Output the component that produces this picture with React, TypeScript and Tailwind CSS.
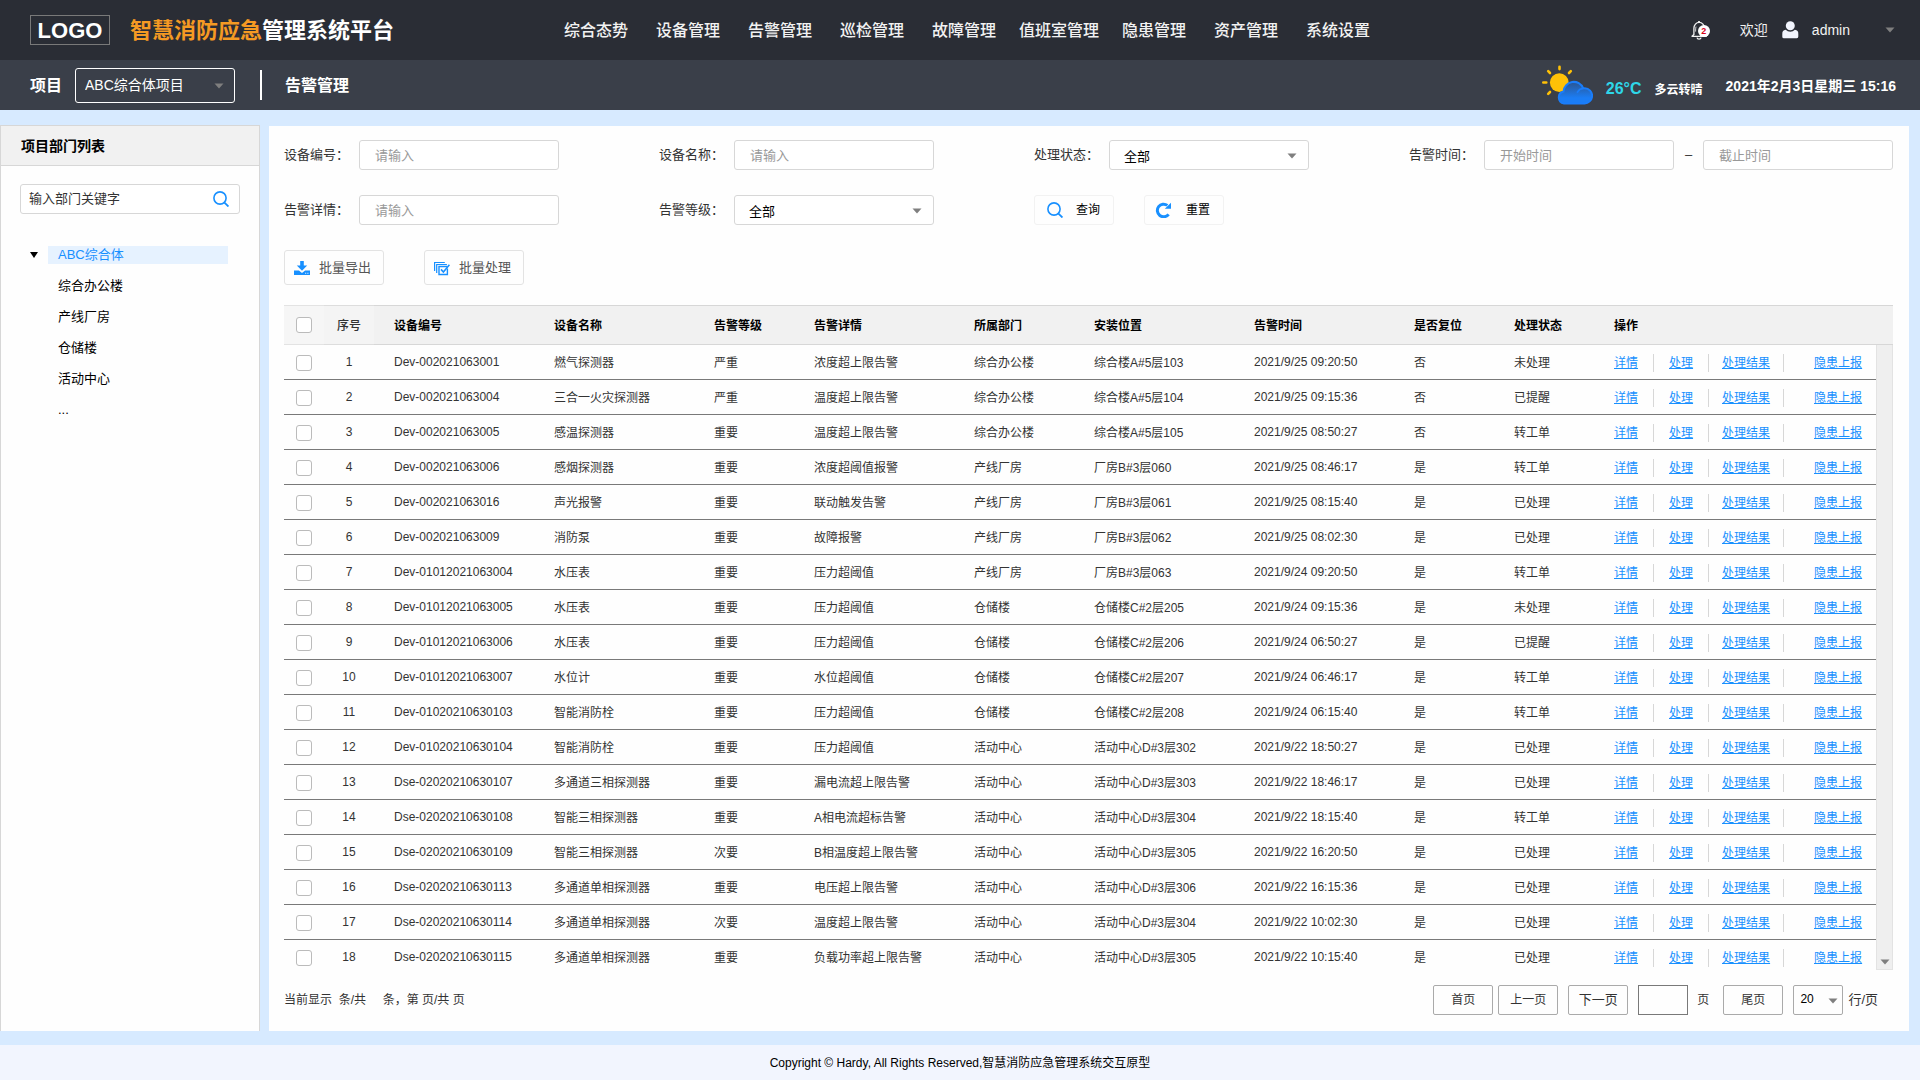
import { ReactNode } from "react";

const nav_items = ['综合态势', '设备管理', '告警管理', '巡检管理', '故障管理', '值班室管理', '隐患管理', '资产管理', '系统设置'];
const departments = ['综合办公楼', '产线厂房', '仓储楼', '活动中心', '...'];

// 设备编号, 设备名称, 告警等级, 告警详情, 所属部门, 安装位置, 告警时间, 是否复位, 处理状态
const alarms = [
    ['Dev-002021063001', '燃气探测器', '严重', '浓度超上限告警', '综合办公楼', '综合楼A#5层103', '2021/9/25 09:20:50', '否', '未处理'],
    ['Dev-002021063004', '三合一火灾探测器', '严重', '温度超上限告警', '综合办公楼', '综合楼A#5层104', '2021/9/25 09:15:36', '否', '已提醒'],
    ['Dev-002021063005', '感温探测器', '重要', '温度超上限告警', '综合办公楼', '综合楼A#5层105', '2021/9/25 08:50:27', '否', '转工单'],
    ['Dev-002021063006', '感烟探测器', '重要', '浓度超阈值报警', '产线厂房', '厂房B#3层060', '2021/9/25 08:46:17', '是', '转工单'],
    ['Dev-002021063016', '声光报警', '重要', '联动触发告警', '产线厂房', '厂房B#3层061', '2021/9/25 08:15:40', '是', '已处理'],
    ['Dev-002021063009', '消防泵', '重要', '故障报警', '产线厂房', '厂房B#3层062', '2021/9/25 08:02:30', '是', '已处理'],
    ['Dev-01012021063004', '水压表', '重要', '压力超阈值', '产线厂房', '厂房B#3层063', '2021/9/24 09:20:50', '是', '转工单'],
    ['Dev-01012021063005', '水压表', '重要', '压力超阈值', '仓储楼', '仓储楼C#2层205', '2021/9/24 09:15:36', '是', '未处理'],
    ['Dev-01012021063006', '水压表', '重要', '压力超阈值', '仓储楼', '仓储楼C#2层206', '2021/9/24 06:50:27', '是', '已提醒'],
    ['Dev-01012021063007', '水位计', '重要', '水位超阈值', '仓储楼', '仓储楼C#2层207', '2021/9/24 06:46:17', '是', '转工单'],
    ['Dev-01020210630103', '智能消防栓', '重要', '压力超阈值', '仓储楼', '仓储楼C#2层208', '2021/9/24 06:15:40', '是', '转工单'],
    ['Dev-01020210630104', '智能消防栓', '重要', '压力超阈值', '活动中心', '活动中心D#3层302', '2021/9/22 18:50:27', '是', '已处理'],
    ['Dse-02020210630107', '多通道三相探测器', '重要', '漏电流超上限告警', '活动中心', '活动中心D#3层303', '2021/9/22 18:46:17', '是', '已处理'],
    ['Dse-02020210630108', '智能三相探测器', '重要', 'A相电流超标告警', '活动中心', '活动中心D#3层304', '2021/9/22 18:15:40', '是', '转工单'],
    ['Dse-02020210630109', '智能三相探测器', '次要', 'B相温度超上限告警', '活动中心', '活动中心D#3层305', '2021/9/22 16:20:50', '是', '已处理'],
    ['Dse-02020210630113', '多通道单相探测器', '重要', '电压超上限告警', '活动中心', '活动中心D#3层306', '2021/9/22 16:15:36', '是', '已处理'],
    ['Dse-02020210630114', '多通道单相探测器', '次要', '温度超上限告警', '活动中心', '活动中心D#3层304', '2021/9/22 10:02:30', '是', '已处理'],
    ['Dse-02020210630115', '多通道单相探测器', '重要', '负载功率超上限告警', '活动中心', '活动中心D#3层305', '2021/9/22 10:15:40', '是', '已处理'],
];

const columns = [
    { title: '设备编号', width: 'w-[160px]' },
    { title: '设备名称', width: 'w-[160px]' },
    { title: '告警等级', width: 'w-[100px]' },
    { title: '告警详情', width: 'w-[160px]' },
    { title: '所属部门', width: 'w-[120px]' },
    { title: '安装位置', width: 'w-[160px]' },
    { title: '告警时间', width: 'w-[160px]' },
    { title: '是否复位', width: 'w-[100px]' },
    { title: '处理状态', width: 'w-[100px]' },
    { title: '操作', width: '' },
];

// device number and alarm time hold no Chinese text and sit a little higher
const latin_columns = [0, 6];

const Caret = ({ className = '' }: { className?: string }) => (
    <svg className={`h-[6px] w-[10px] ${className}`} viewBox="0 0 10 6" fill="#7f7f7f">
        <path d="M0.5 0.5h9L5 5.5z" />
    </svg>
);

const SearchIcon = () => (
    <svg className="size-4 shrink-0" viewBox="0 0 16 16" fill="none" stroke="#1890ff" strokeWidth="1.6">
        <circle cx="7" cy="7" r="6.1" />
        <path d="M11.2 11.4l4.2 4.1" strokeWidth="1.8" />
    </svg>
);

const ResetIcon = () => (
    <svg className="size-4 shrink-0" viewBox="0 0 16 16">
        <path d="M13.6 12.4A6.3 6.3 0 1 1 12.4 3.4" fill="none" stroke="#1890ff" strokeWidth="3" />
        <path d="M16 0.8v6h-6.2z" fill="#1890ff" />
    </svg>
);

const ExportIcon = () => (
    <svg className="size-4 shrink-0" viewBox="0 0 16 16" fill="#1890ff">
        <path d="M6.2 1h3.6v4.6h3.4L8 10.8 2.8 5.6h3.4z" />
        <path d="M0 10.6h4.9L8 13l3.1-2.4H16V15H0z" />
        <path d="M11.2 12.8h1v1h-1zM13.4 12.8h1v1h-1z" fill="#fff" />
    </svg>
);

const BatchIcon = () => (
    <svg className="size-4 shrink-0" viewBox="0 0 16 16" fill="none" stroke="#1890ff">
        <path d="M0.6 11V2.5h10.2M2.7 13V4.5h10.2" strokeWidth="1.2" />
        <path d="M13.4 8.5v6H5v-8h8" strokeWidth="1.4" />
        <path d="M7 9.4l2.4 2.6 6-7.2" strokeWidth="1.6" />
    </svg>
);

const BellIcon = () => (
    <svg className="h-5 w-[19px]" viewBox="0 0 19 20" fill="none" stroke="#f2f2f2" strokeWidth="1.3">
        <path d="M8 2.2V1" strokeWidth="1.8" />
        <path d="M2.9 14.6V8.2a5.3 5.8 0 0 1 10.6 0v6.4l1.8 1.7H1z" strokeLinejoin="round" />
        <path d="M5 6.6c-.4 1.4-.4 3-.4 5" strokeWidth="0.8" />
        <path d="M6 17.6c.5 1.9 3.6 1.9 4.1 0" />
    </svg>
);

const WeatherIcon = () => (
    <svg className="h-10 w-[51px]" viewBox="0 0 51 40">
        <defs>
            <linearGradient id="cloud" x1="0" y1="0" x2="0" y2="1">
                <stop offset="0" stopColor="#2b5591" />
                <stop offset="0.75" stopColor="#1b7df5" />
            </linearGradient>
        </defs>
        <g stroke="#ffc107" strokeWidth="2.6" strokeLinecap="round">
            <path d="M17.5 1.7v2.4M6.2 6.2l1.8 1.8M28.8 6.2L27 8M1.3 17.5h3M6.2 28.8L8 27" />
        </g>
        <circle cx="17.3" cy="17.6" r="9.4" fill="#ffc107" />
        <path
            d="M22 38.4h20.2a7.6 7.6 0 0 0 0.6-15.2 8 8 0 0 0-1.6 0.2 10.2 10.2 0 0 0-19.7 3.2 6 6 0 0 0 0.5 11.8z"
            fill="url(#cloud)" stroke="#1a7dfa" strokeWidth="2"
        />
        <path d="M35.5 27.2c1-2 2.5-3.4 5.6-3.8" fill="none" stroke="#1a7dfa" strokeWidth="1.8" strokeLinecap="round" />
    </svg>
);

const UserIcon = () => (
    <svg className="h-[18px] w-[17px]" viewBox="0 0 17 18" fill="#f2f5fe">
        <circle cx="8.3" cy="4.7" r="4.5" />
        <path d="M0.3 17V13a4 4 0 0 1 3.4-4.2 6.6 6.6 0 0 0 9.2 0A4 4 0 0 1 16.3 13v2.6A1.6 1.6 0 0 1 14.7 17.3H1.9A1.6 1.6 0 0 1 0.3 15.7z" />
    </svg>
);

const Checkbox = ({ label }: { label: string }) => (
    <input
        type="checkbox"
        aria-label={label}
        className="block size-4 mx-auto appearance-none rounded-[3px] border border-[#bbbbbb] bg-white checked:bg-[#1890ff]"
    />
);

const Field = ({ id, label, children }: { id: string, label: string, children: ReactNode }) => (
    <div className="flex items-center">
        <label htmlFor={id} className="w-[75px] shrink-0 whitespace-nowrap">{label}</label>
        {children}
    </div>
);

const TextInput = ({ id, placeholder, label }: { id: string, placeholder: string, label?: string }) => (
    <input
        id={id}
        aria-label={label}
        placeholder={placeholder}
        className="h-[30px] w-0 min-w-0 flex-1 rounded-[3px] border border-[#d7d7d7] bg-white px-[15px] text-[13px] placeholder:text-[#999999]"
    />
);

const SelectInput = ({ id }: { id: string }) => (
    <div className="relative flex-1">
        <select id={id} className="block h-[30px] w-full appearance-none rounded-[3px] border border-[#d7d7d7] bg-white pl-[14px] pt-[3px] text-[13px] text-black">
            <option>全部</option>
        </select>
        <Caret className="pointer-events-none absolute right-3 top-[13px]" />
    </div>
);

const Header = () => (
    <header className="text-[#f2f2f2]">
        <div className="flex h-[60px] items-center bg-[#2a2d35] pl-[30px] pr-[25px]">
            <div className="flex h-[30px] w-20 items-center justify-center border border-[#797979] text-[22px] font-bold text-white">LOGO</div>
            <h1 className="ml-5 w-[420px] whitespace-nowrap text-[22px] font-bold text-white">
                <span className="text-[#f59a23]">智慧消防应急</span>管理系统平台
            </h1>
            <nav className="flex pt-[2px] text-base font-medium">
                {nav_items.map(item => (
                    <a key={item} href="#" className="min-w-[92px] whitespace-nowrap px-[9px] text-center">{item}</a>
                ))}
            </nav>
            <div className="ml-auto flex items-center text-sm">
                <button aria-label="消息" className="relative mr-[30px]">
                    <BellIcon />
                    <span className="absolute right-0 top-[5px] flex size-3 items-center justify-center rounded-full bg-white text-[9px] leading-none font-bold text-[#d9001b]">2</span>
                </button>
                <span className="mr-[14px]">欢迎</span>
                <UserIcon />
                <button className="ml-[13px] flex items-center gap-[35px]">admin <Caret /></button>
            </div>
        </div>
        <div className="flex h-[50px] items-center bg-[#3a3f49] pl-[30px] pr-[24px] text-white">
            <label htmlFor="project" className="w-[45px] pt-[2px] text-base font-bold">项目</label>
            <div className="relative">
                <select id="project" className="block h-[35px] w-40 appearance-none rounded-[3px] border border-white bg-[#3a3f49] pl-[9px] text-sm">
                    <option>ABC综合体项目</option>
                </select>
                <Caret className="pointer-events-none absolute right-[11px] top-[15px]" />
            </div>
            <div className="ml-[25px] h-[30px] w-[2px] bg-white" />
            <h2 className="ml-[23px] pt-[2px] text-base font-bold">告警管理</h2>
            <div className="ml-auto flex items-center font-bold">
                <WeatherIcon />
                <span className="ml-[13px] pt-2 text-base text-[#2ed6e8]">26°C</span>
                <span className="ml-[13px] pt-[10px] text-xs">多云转晴</span>
                <span className="ml-[23px] pt-[2px] text-sm">2021年2月3日星期三 15:16</span>
            </div>
        </div>
    </header>
);

const Sidebar = () => (
    <aside className="w-[260px] shrink-0 border border-b-0 border-[#d7d7d7] bg-[#fefefe]">
        <h3 className="flex h-10 items-center border-b border-[#d7d7d7] bg-[#f1f1f1] pl-5 text-sm font-bold text-black">项目部门列表</h3>
        <div className="mx-[19px] mt-[18px] flex h-[30px] items-center rounded-[3px] border border-[#d7d7d7] bg-white pl-2 pr-[10px]">
            <input aria-label="部门关键字" placeholder="输入部门关键字" className="min-w-0 flex-1 text-[13px] placeholder:text-[#333333]" />
            <button aria-label="搜索"><SearchIcon /></button>
        </div>
        <ul className="ml-[29px] mt-[25px] text-[13px] leading-[18px] text-black">
            <li className="flex h-[31px] items-center">
                <svg className="mr-[10px] h-[6px] w-2" viewBox="0 0 8 6"><path d="M0 0h8L4 6z" /></svg>
                <a href="#" className="w-[180px] bg-[#e6f2ff] pl-[10px] text-[#1890ff]">ABC综合体</a>
            </li>
            {departments.map(name => (
                <li key={name} className="flex h-[31px] items-center pl-[28px]"><a href="#">{name}</a></li>
            ))}
        </ul>
    </aside>
);

const Filters = () => (
    <form className="grid grid-cols-[275px_275px_275px_minmax(0,1fr)] gap-x-[100px] gap-y-[25px] text-[13px]">
        <Field id="device_no" label="设备编号："><TextInput id="device_no" placeholder="请输入" /></Field>
        <Field id="device_name" label="设备名称："><TextInput id="device_name" placeholder="请输入" /></Field>
        <Field id="status" label="处理状态："><SelectInput id="status" /></Field>
        <Field id="start_time" label="告警时间：">
            <TextInput id="start_time" placeholder="开始时间" />
            <span className="w-[29px] text-center">–</span>
            <TextInput id="end_time" label="截止时间" placeholder="截止时间" />
        </Field>
        <Field id="detail" label="告警详情："><TextInput id="detail" placeholder="请输入" /></Field>
        <Field id="level" label="告警等级："><SelectInput id="level" /></Field>
        <div className="flex gap-[30px] text-xs text-black">
            <button type="button" className="flex h-[30px] w-20 items-center gap-[13px] rounded-[3px] border border-[#f2f2f2] pl-3"><SearchIcon />查询</button>
            <button type="button" className="flex h-[30px] w-20 items-center gap-[15px] rounded-[3px] border border-[#f2f2f2] pl-[10px]"><ResetIcon />重置</button>
        </div>
    </form>
);

const Actions = () => (
    <div className="flex items-center whitespace-nowrap text-[#1890ff] underline">
        <a href="#">详情</a>
        <i className="mx-[15px] h-[18px] w-px bg-[#d7d7d7]" />
        <a href="#">处理</a>
        <i className="ml-[15px] mr-[13px] h-[18px] w-px bg-[#d7d7d7]" />
        <a href="#">处理结果</a>
        <i className="ml-[13px] mr-[30px] h-[18px] w-px bg-[#d7d7d7]" />
        <a href="#">隐患上报</a>
    </div>
);

const AlarmTable = () => (
    <div className="mt-5 flex">
        <table className="flex-1 table-fixed border-separate border-spacing-0 whitespace-nowrap text-left text-xs">
            <thead>
                <tr className="h-10 text-black">
                    <th className="w-10 border-y border-[#e3e3e3] bg-[#f6f6f6]"><Checkbox label="全选" /></th>
                    <th className="w-[50px] border-y border-[#dddddd] bg-[#f4f4f4] pt-[2px] text-center font-medium text-[#333333]">序号</th>
                    {columns.map(({ title, width }) => (
                        <th key={title} className={`border-y border-[#d7d7d7] bg-[#f1f1f1] pl-5 pt-[2px] font-bold ${width}`}>{title}</th>
                    ))}
                </tr>
            </thead>
            <tbody>
                {alarms.map((alarm, i) => (
                    <tr key={alarm[0]} className="h-[35px] [&>td]:border-b [&>td]:border-[#797979] last:[&>td]:border-transparent">
                        <td className="pt-[2px]"><Checkbox label={`选择 ${alarm[0]}`} /></td>
                        <td className="text-center">{i + 1}</td>
                        {alarm.map((value, j) => (
                            <td key={j} className={latin_columns.includes(j) ? 'pl-5' : 'pl-5 pt-[2px]'}>{value}</td>
                        ))}
                        <td className="pl-5 pt-[2px]"><Actions /></td>
                    </tr>
                ))}
            </tbody>
        </table>
        <div className="mb-[5px] flex w-[17px] shrink-0 flex-col">
            <div className="h-10 border-y border-[#d7d7d7] bg-[#f1f1f1]" />
            <div className="flex flex-1 items-end justify-center border border-t-0 border-[#e3e3e3] bg-[#efefef] pb-1">
                <Caret />
            </div>
        </div>
    </div>
);

const page_button = 'h-[30px] w-[60px] rounded-[2px] border border-[#aaaaaa]';

const Pagination = () => (
    <div className="mt-[10px] flex items-center pr-[15px] text-xs">
        <p className="mr-auto whitespace-pre">{'当前显示  条/共     条，第 页/共 页'}</p>
        <button className={`${page_button} mr-[5px]`}>首页</button>
        <button className={`${page_button} mr-[10px]`}>上一页</button>
        <button className={`${page_button} mr-[10px] text-[13px]`}>下一页</button>
        <input id="page" className="h-[30px] w-[50px] border border-[#797979] px-1" />
        <label htmlFor="page" className="ml-[9px] mr-[14px]">页</label>
        <button className={`${page_button} mr-[10px]`}>尾页</button>
        <div className="relative">
            <select id="page_size" className="block h-[30px] w-[50px] appearance-none rounded-[2px] border border-[#aaaaaa] pb-[2px] pl-[6px] text-black">
                <option>20</option>
            </select>
            <Caret className="pointer-events-none absolute right-[5px] top-[13px]" />
        </div>
        <label htmlFor="page_size" className="ml-[5px] text-[13px]">行/页</label>
    </div>
);

const App = () => (
    <div className="flex min-h-screen flex-col bg-[#d7eaff] font-['Liberation_Sans','Noto_Sans_CJK_SC',sans-serif] text-[#333333]">
        <Header />
        <div className="flex flex-1 pb-[14px] pr-[11px] pt-[15px]">
            <Sidebar />
            <main className="ml-[9px] mt-px min-w-0 flex-1 bg-[#fefefe] pb-4 pl-[15px] pr-4 pt-[14px]">
                <Filters />
                <div className="mt-[25px] flex gap-10 text-[13px] text-[#555555]">
                    <button className="flex h-[35px] w-[100px] items-center gap-[9px] rounded-[3px] border border-[#e3e3e3] pl-[9px]"><ExportIcon />批量导出</button>
                    <button className="flex h-[35px] w-[100px] items-center gap-[9px] rounded-[3px] border border-[#e3e3e3] pl-[9px]"><BatchIcon />批量处理</button>
                </div>
                <AlarmTable />
                <Pagination />
            </main>
        </div>
        <footer className="flex h-[35px] items-center justify-center bg-[#f2f5fe] text-xs text-black">
            Copyright © Hardy, All Rights Reserved,智慧消防应急管理系统交互原型
        </footer>
    </div>
);

export default App;
